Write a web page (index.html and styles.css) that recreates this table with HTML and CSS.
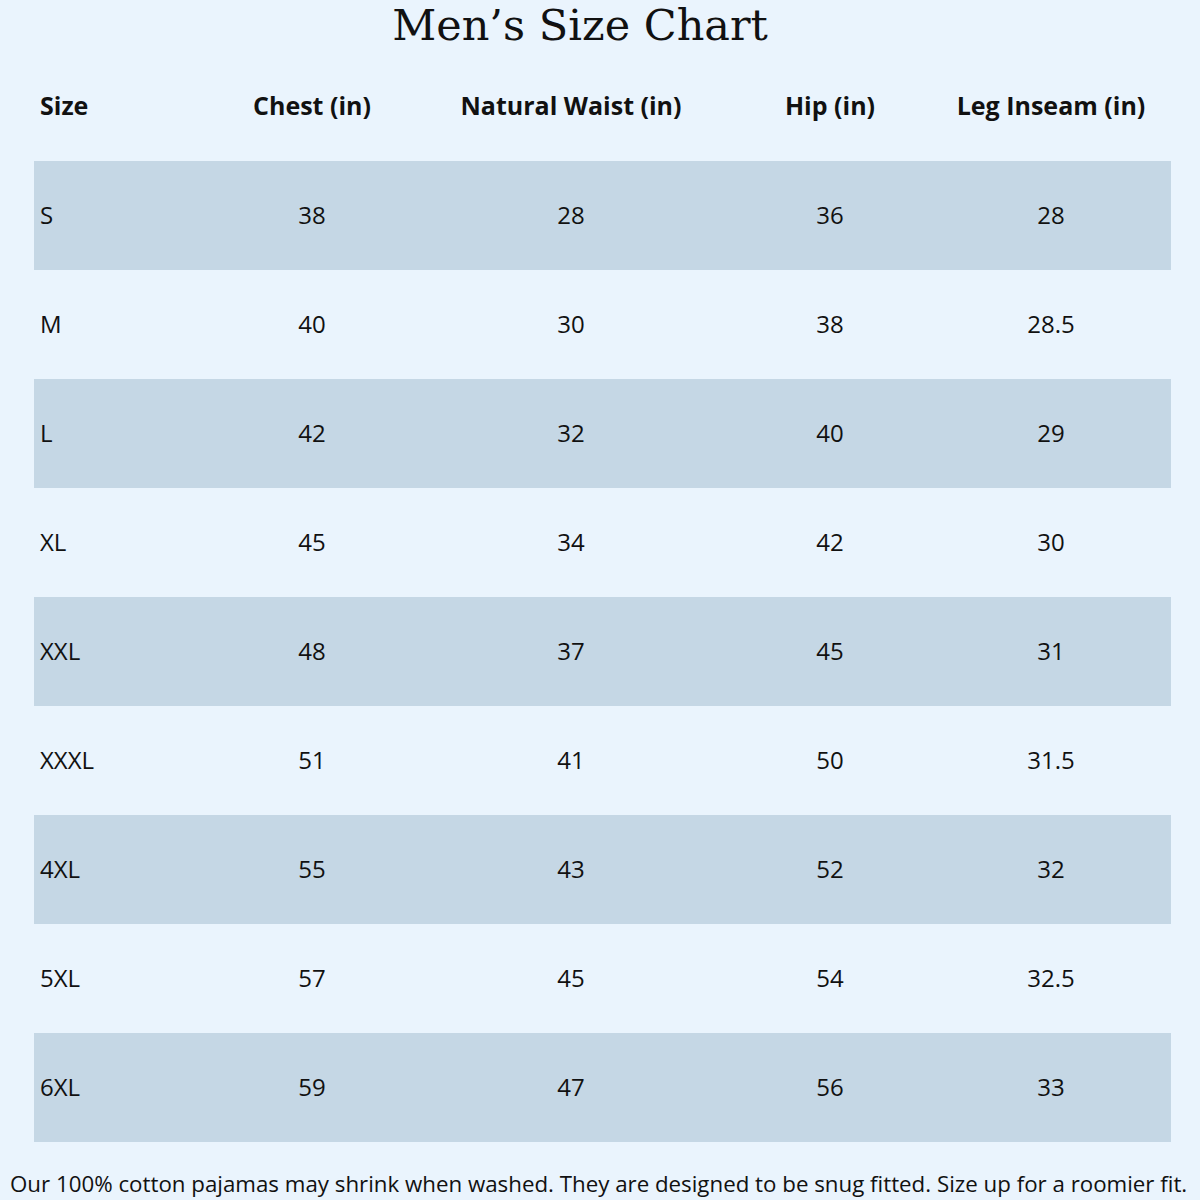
FILE: index.html
```html
<!DOCTYPE html>
<html lang="en">
<head>
<meta charset="utf-8">
<title>Men’s Size Chart</title>
<link rel="stylesheet" href="styles.css">
</head>
<body>
<div class="page">
  <h1 class="title">Men’s Size Chart</h1>
  <div class="chart">
    <div class="row head">
      <div class="cell first">Size</div>
      <div class="cell">Chest (in)</div>
      <div class="cell">Natural Waist (in)</div>
      <div class="cell">Hip (in)</div>
      <div class="cell">Leg Inseam (in)</div>
    </div>
    <div class="row alt"><div class="cell first">S</div><div class="cell">38</div><div class="cell">28</div><div class="cell">36</div><div class="cell">28</div></div>
    <div class="row"><div class="cell first">M</div><div class="cell">40</div><div class="cell">30</div><div class="cell">38</div><div class="cell">28.5</div></div>
    <div class="row alt"><div class="cell first">L</div><div class="cell">42</div><div class="cell">32</div><div class="cell">40</div><div class="cell">29</div></div>
    <div class="row"><div class="cell first">XL</div><div class="cell">45</div><div class="cell">34</div><div class="cell">42</div><div class="cell">30</div></div>
    <div class="row alt"><div class="cell first">XXL</div><div class="cell">48</div><div class="cell">37</div><div class="cell">45</div><div class="cell">31</div></div>
    <div class="row"><div class="cell first">XXXL</div><div class="cell">51</div><div class="cell">41</div><div class="cell">50</div><div class="cell">31.5</div></div>
    <div class="row alt"><div class="cell first">4XL</div><div class="cell">55</div><div class="cell">43</div><div class="cell">52</div><div class="cell">32</div></div>
    <div class="row"><div class="cell first">5XL</div><div class="cell">57</div><div class="cell">45</div><div class="cell">54</div><div class="cell">32.5</div></div>
    <div class="row alt"><div class="cell first">6XL</div><div class="cell">59</div><div class="cell">47</div><div class="cell">56</div><div class="cell">33</div></div>
  </div>
  <p class="note">Our 100% cotton pajamas may shrink when washed. They are designed to be snug fitted. Size up for a roomier fit.</p>
</div>
</body>
</html>
```

FILE: styles.css
```css
html, body {
  margin: 0;
  padding: 0;
  background: #eaf4fd;
}
.page {
  width: 1200px;
  height: 1200px;
  overflow: hidden;
  display: flex;
  flex-direction: column;
  color: #111;
  font-family: "Open Sans", "Noto Sans", sans-serif;
}
.title {
  margin: 0;
  height: 58px;
  text-align: center;
  font-family: "DejaVu Serif", "Liberation Serif", serif;
  font-weight: normal;
  font-size: 43px;
  line-height: 50px;
  color: #111;
  padding-right: 40px;
}
.chart {
  margin: 12px 29px 0 34px;
  display: flex;
  flex-direction: column;
}
.row {
  display: grid;
  grid-template-columns: 166px 224px 294px 224px 218px;
  height: 109px;
  align-items: center;
  font-size: 24px;
  padding-bottom: 3px;
  box-sizing: border-box;
}
.row.head {
  height: 91px;
  font-weight: 700;
  font-size: 25px;
  align-items: start;
  padding-top: 18px;
  padding-bottom: 0;
}
.row.alt {
  background: #c5d7e5;
}
.cell {
  text-align: center;
}
.cell.first {
  text-align: left;
  padding-left: 6px;
}
.note {
  margin: 26px 0 0 10px;
  font-size: 22.3px;
  white-space: nowrap;
  color: #111;
}
```
